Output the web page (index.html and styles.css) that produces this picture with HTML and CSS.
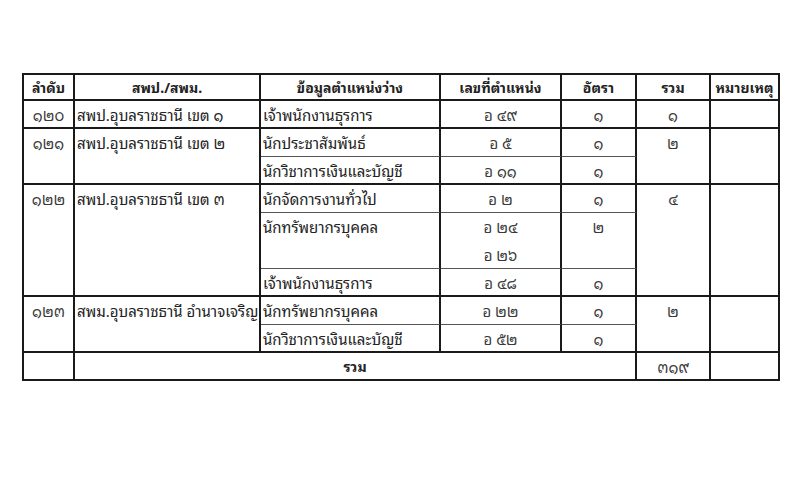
FILE: index.html
```html
<!DOCTYPE html>
<html lang="th">
<head>
<meta charset="utf-8">
<link rel="stylesheet" href="styles.css">
</head>
<body>
<div class="page">
<table class="grid">
  <colgroup>
    <col class="c1"><col class="c2"><col class="c3"><col class="c4"><col class="c5"><col class="c6"><col class="c7">
  </colgroup>
  <thead>
    <tr class="head">
      <th>ลำดับ</th>
      <th>สพป./สพม.</th>
      <th>ข้อมูลตำแหน่งว่าง</th>
      <th>เลขที่ตำแหน่ง</th>
      <th>อัตรา</th>
      <th>รวม</th>
      <th>หมายเหตุ</th>
    </tr>
  </thead>
  <tbody>
    <tr>
      <td class="num">๑๒๐</td>
      <td class="txt">สพป.อุบลราชธานี เขต ๑</td>
      <td class="txt">เจ้าพนักงานธุรการ</td>
      <td class="ctr">อ ๔๙</td>
      <td class="ctr">๑</td>
      <td class="ctr">๑</td>
      <td></td>
    </tr>
    <tr>
      <td class="num" rowspan="2">๑๒๑</td>
      <td class="txt" rowspan="2">สพป.อุบลราชธานี เขต ๒</td>
      <td class="txt thin">นักประชาสัมพันธ์</td>
      <td class="ctr thin">อ ๕</td>
      <td class="ctr thin">๑</td>
      <td class="ctr" rowspan="2">๒</td>
      <td rowspan="2"></td>
    </tr>
    <tr>
      <td class="txt">นักวิชาการเงินและบัญชี</td>
      <td class="ctr">อ ๑๑</td>
      <td class="ctr">๑</td>
    </tr>
    <tr>
      <td class="num" rowspan="4">๑๒๒</td>
      <td class="txt" rowspan="4">สพป.อุบลราชธานี เขต ๓</td>
      <td class="txt thin">นักจัดการงานทั่วไป</td>
      <td class="ctr thin">อ ๒</td>
      <td class="ctr thin">๑</td>
      <td class="ctr" rowspan="4">๔</td>
      <td rowspan="4"></td>
    </tr>
    <tr>
      <td class="txt thin" rowspan="2">นักทรัพยากรบุคคล</td>
      <td class="ctr open">อ ๒๔</td>
      <td class="ctr thin" rowspan="2">๒</td>
    </tr>
    <tr>
      <td class="ctr thin">อ ๒๖</td>
    </tr>
    <tr>
      <td class="txt">เจ้าพนักงานธุรการ</td>
      <td class="ctr">อ ๔๘</td>
      <td class="ctr">๑</td>
    </tr>
    <tr>
      <td class="num" rowspan="2">๑๒๓</td>
      <td class="txt" rowspan="2">สพม.อุบลราชธานี อำนาจเจริญ</td>
      <td class="txt thin">นักทรัพยากรบุคคล</td>
      <td class="ctr thin">อ ๒๒</td>
      <td class="ctr thin">๑</td>
      <td class="ctr" rowspan="2">๒</td>
      <td rowspan="2"></td>
    </tr>
    <tr>
      <td class="txt">นักวิชาการเงินและบัญชี</td>
      <td class="ctr">อ ๕๒</td>
      <td class="ctr">๑</td>
    </tr>
    <tr>
      <td></td>
      <td class="total" colspan="4">รวม</td>
      <td class="ctr">๓๑๙</td>
      <td></td>
    </tr>
  </tbody>
</table>
</div>
</body>
</html>
```

FILE: styles.css
```css
html, body {
  margin: 0;
  padding: 0;
  background: #ffffff;
}

.page {
  padding: 73px 0 0 22px;
}

.grid {
  table-layout: fixed;
  width: 758px;
  border-collapse: separate;
  border-spacing: 0;
  border-top: 2px solid #1a1a1a;
  border-left: 2px solid #1a1a1a;
  font-family: "Noto Sans Thai Looped", "Noto Serif Thai", "Loma", "Garuda", "Leelawadee UI", Tahoma, "Noto Sans Thai", "Noto Sans", sans-serif;
  font-size: 15px;
  color: #222222;
}

.c1 { width: 51px; }
.c2 { width: 186px; }
.c3 { width: 180px; }
.c4 { width: 121px; }
.c5 { width: 75px; }
.c6 { width: 74px; }
.c7 { width: 69px; }

.grid th,
.grid td {
  box-sizing: border-box;
  border-right: 2px solid #1a1a1a;
  border-bottom: 2px solid #1a1a1a;
  padding: 0 2px;
  height: 28px;
  line-height: 26px;
  vertical-align: top;
  white-space: nowrap;
  overflow: hidden;
}

.grid th {
  height: 26px;
  line-height: 24px;
  font-size: 14px;
  font-weight: bold;
  text-align: center;
  vertical-align: middle;
  padding: 0;
}

.grid td.thin {
  border-bottom: 1px solid #555555;
}

.grid td.open {
  border-bottom: none;
}

.num {
  text-align: center;
  color: #3a3a3a;
}

.txt {
  text-align: left;
}

.ctr {
  text-align: center;
  color: #3a3a3a;
}

.total {
  text-align: center;
  font-weight: bold;
  font-size: 14px;
}
```
